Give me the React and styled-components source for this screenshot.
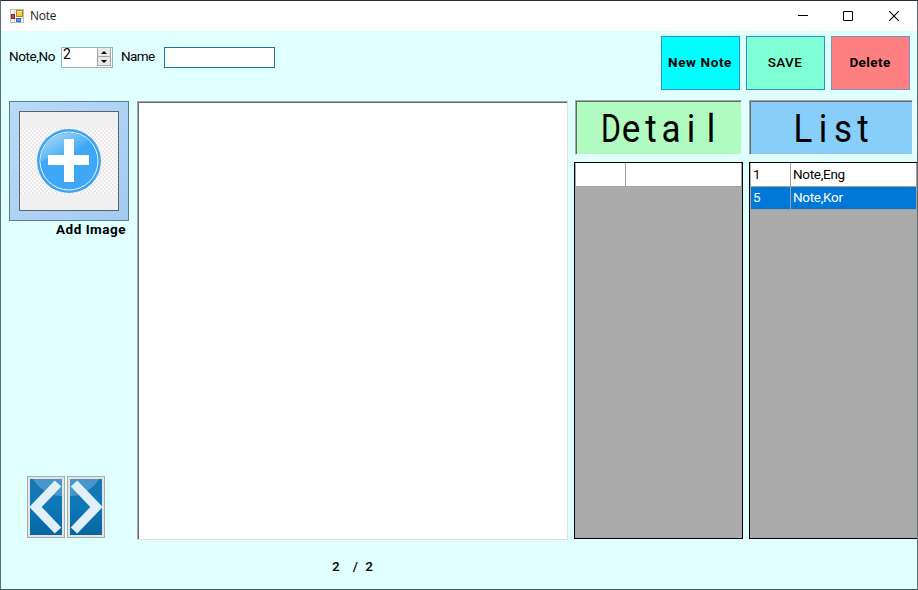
import React from "react";
import styled, { createGlobalStyle } from "styled-components";

const Global = createGlobalStyle`
  * { box-sizing: border-box; }
  body { margin: 0; overflow: hidden; font-family: Roboto, "Noto Sans CJK KR", sans-serif; font-size: 13.5px; color: #000; }
`;
const Window = styled.div`
  width: 918px; height: 590px; display: flex; flex-direction: column; background: #e0ffff;
  border: 1px solid #5f6f70; border-top-color: #2f2b30; border-bottom-color: #41575a;
`;
const TitleBar = styled.header`
  height: 30px; flex: none; background: #fff; display: flex; align-items: center; padding-left: 9px;
`;
const Title = styled.span`
  flex: 1; margin-left: 6px; font: 12px/16px "Open Sans", sans-serif; color: #222; letter-spacing: -0.25px;
`;
const Controls = styled.div`
  display: flex; width: 138px; height: 28px;
`;
const Control = styled.div`
  width: 46px; display: grid; place-items: center; padding-left: ${(p) => p.$shift || 0}px;
`;
const Toolbar = styled.div`
  height: 70px; flex: none; display: flex; padding: 5px 7px 0 8px;
`;
const Fields = styled.div`
  flex: 1; display: flex; align-items: flex-start; padding-top: 11px;
`;
const Label = styled.label`
  width: ${(p) => p.$w}px; line-height: 18px; white-space: nowrap; letter-spacing: ${(p) => p.$ls || 0}px;
`;
const Spinner = styled.div`
  width: 52px; height: 21px; background: #fff; border: 1px solid #a3b0b5; display: flex; margin-right: 8px;
`;
const SpinnerValue = styled.span`
  flex: 1; padding-left: 1px; line-height: 13px; font-size: 14px;
`;
const Arrows = styled.div`
  width: 15px; height: 18px; display: grid; grid-template-rows: 9px 9px;
`;
const Arrow = styled.div`
  width: 14px; background: #e9e9e9; border: solid #a6a6a6; border-width: 0 1px 1px;
  display: grid; place-items: center;
  svg { display: block; }
`;
const Input = styled.input`
  width: 111px; height: 21px; border: 1px solid #1f73b4; background: #fff; padding: 0 3px; outline: none;
`;
const Actions = styled.div`
  display: flex; gap: 6px;
`;
const Action = styled.button`
  width: 79px; height: 54px; padding: 0 1px 2px 0; border: 1px solid ${(p) => p.$edge || "#2f8fd0"};
  background: ${(p) => p.$bg}; color: #000; white-space: nowrap;
  font: ${(p) => p.$weight || 700} 13.5px Roboto, sans-serif; letter-spacing: ${(p) => p.$ls}px;
`;
const Main = styled.main`
  flex: 1; display: flex; padding-left: 8px;
`;
const Side = styled.aside`
  width: 128px; height: 437px; flex: none; display: flex; flex-direction: column;
`;
const ImageFrame = styled.button`
  width: 120px; height: 120px; padding: 9px; border: 1px solid #607d8c;
  background: linear-gradient(135deg, #b9daf8, #a3cbf0);
`;
const Picture = styled.div`
  width: 100px; height: 100px; border: 1px solid #5c646a; background: #f0f0f0;
  display: flex; align-items: center;
`;
const Caption = styled.div`
  width: 117px; line-height: 17px; text-align: right; font-weight: 700; letter-spacing: 0.5px;
`;
const Pager = styled.div`
  display: flex; gap: 2px; margin: auto 0 0 18px;
`;
const PagerButton = styled.button`
  width: 38px; height: 62px; padding: 2px; border: 1px solid #a9aba9; background: #e2e5e6; display: block;
  svg { display: block; }
`;
const Editor = styled.textarea`
  width: 431px; height: 439px; flex: none; resize: none; outline: none; background: #fff;
  border: 1px solid #d9e2e2; border-top-color: #a0a8a8; border-left-color: #a0a8a8;
  box-shadow: inset 1px 1px #696969;
`;
const Column = styled.section`
  width: ${(p) => p.$w}px; margin-left: 6px; margin-top: -1px; flex: none; display: flex; flex-direction: column; overflow: hidden;
`;
const Heading = styled.h1`
  width: ${(p) => p.$w}px; height: 55px; margin: 0 0 7px ${(p) => p.$ml || 0}px; padding: 3px 0 0 ${(p) => p.$indent}px;
  font: 400 38px/50px Roboto, sans-serif; display: flex; background: ${(p) => p.$bg};
  border: 1px solid #f3ffff; border-top-color: #a0a8a8; border-left-color: #a0a8a8;
  box-shadow: inset 1px 1px #696969;
`;
const Letter = styled.span`
  width: 20px; height: 50px; display: flex; justify-content: center;
  transform: scaleX(${(p) => (p.$wide ? 0.8 : 0.92)});
`;
const Grid = styled.div`
  width: ${(p) => p.$w}px; height: 377px; flex: none; background: #ababab; border: 1px solid #000; padding: 0 0 0 1px;
`;
const Row = styled.div`
  height: ${(p) => p.$h || 23}px; display: grid; grid-template-columns: ${(p) => p.$cols};
  background: ${(p) => (p.$selected ? "#0078d7" : "#fff")}; color: ${(p) => (p.$selected ? "#fff" : "#000")};
  line-height: ${(p) => (p.$selected ? 20 : 22)}px;
`;
const Cell = styled.div`
  padding-left: 2px; border-right: 1px solid #a0a0a0; border-bottom: 1px solid #a0a0a0;
  white-space: nowrap; letter-spacing: ${(p) => p.$ls || 0}px;
`;
const Footer = styled.footer`
  height: 48px; flex: none; padding: 15px 0 0 331px; display: flex; gap: 13px; font-weight: 500; line-height: 20px;
`;
const Total = styled.span`
  word-spacing: 4px;
`;

function Mono({ text }) {
  return [...text].map((c, i) => (
    <Letter key={i} $wide={c === "D"}>{c}</Letter>
  ));
}

function AppIcon() {
  return (
    <svg width="14" height="14" viewBox="0 0 14 14">
      <rect x=".5" y=".5" width="13" height="13" fill="#fff" stroke="#bcbcbc" />
      <path d="M4.5 0v14M0 9.5h14" stroke="#c7c7c7" />
      <rect x="1.5" y="5.500" width="3" height="4" fill="#c84545" stroke="#8e2020" />
      <rect x="6.5" y="1.5" width="6" height="6" fill="#f7cb45" stroke="#b8861c" />
      <path d="M7 2.500h5" stroke="#ffeb98" />
      <rect x="6.5" y="9.5" width="4" height="3" fill="#5f9ae8" stroke="#386db8" />
    </svg>
  );
}

function PlusPicture() {
  return (
    <svg width="98" height="66" viewBox="0 0 98 66">
      <defs>
        <pattern id="checks" width="4" height="4" patternUnits="userSpaceOnUse">
          <path fill="#fbfafa" d="M0 0h4v4H0z" />
          <path fill="#ece8e9" d="M0 0h2v2H0zM2 2h2v2H2z" />
        </pattern>
        <linearGradient id="shine" x1="0" y1="0" x2=".65" y2=".75">
          <stop offset="0" stopColor="#b9e0f8" />
          <stop offset=".7" stopColor="#62b9f5" />
          <stop offset="1" stopColor="#3fa7f5" />
        </linearGradient>
      </defs>
      <path fill="url(#checks)" d="M0 0h98v66H0z" />
      <circle cx="49" cy="33" r="32" fill="#3da5ef" />
      <circle cx="49" cy="33" r="29" fill="#3fa7f5" stroke="#e8f6ff" />
      <path d="M20.5 35A28.500 28.500 0 0 1 68 12Q60 26 44 27T20.500 35Z" fill="url(#shine)" />
      <path d="M44 11h10v16h15v10H54v17H44V37H28V27h16z" fill="#fff" />
    </svg>
  );
}

function Chevron({ flip }) {
  const id = flip ? "blueNext" : "bluePrev";
  return (
    <svg width="32" height="56" viewBox="0 0 32 56">
      <defs>
        <linearGradient id={id} x1="0" y1="0" x2="0" y2="1">
          <stop offset="0" stopColor="#1b76b2" />
          <stop offset=".5" stopColor="#0c78b8" />
          <stop offset="1" stopColor="#0666a2" />
        </linearGradient>
      </defs>
      <g transform={flip ? "translate(32 0) scale(-1 1)" : undefined}>
        <path fill={`url(#${id})`} d="M0 0h32v56H0z" />
        <path fill="#67aedb" opacity=".6" d="M3 0h29v17Q14 17 3 0Z" />
        <path d="M28 4.500L5.500 28L28 51.500" fill="none" stroke="#e0eff9" strokeWidth="9" />
      </g>
    </svg>
  );
}

export default function App() {
  return (
    <>
      <Global />
      <Window>
        <TitleBar>
          <AppIcon />
          <Title>Note</Title>
          <Controls>
            <Control $shift={2}><svg width="10" height="10"><path d="M0 4.500h10" stroke="#000" /></svg></Control>
            <Control><svg width="10" height="10"><path d="M.5.500h9v9h-9z" fill="none" stroke="#000" /></svg></Control>
            <Control><svg width="10" height="10"><path d="M0 0l10 10M10 0L0 10" stroke="#000" strokeWidth="1.100" /></svg></Control>
          </Controls>
        </TitleBar>
        <Toolbar>
          <Fields>
            <Label $w={52} $ls={-0.4}>Note,No</Label>
            <Spinner>
              <SpinnerValue>2</SpinnerValue>
              <Arrows>
                <Arrow><svg width="6" height="3"><path d="M0 3l3-3 3 3z" /></svg></Arrow>
                <Arrow><svg width="6" height="3"><path d="M0 0l3 3 3-3z" /></svg></Arrow>
              </Arrows>
            </Spinner>
            <Label $w={43} $ls={-0.6}>Name</Label>
            <Input aria-label="Name" />
          </Fields>
          <Actions>
            <Action $bg="#00ffff" $ls={0.6}>New Note</Action>
            <Action $bg="#7fffd4" $weight={500} $ls={0.4}>SAVE</Action>
            <Action $bg="#ff8080" $edge="#7f8fc0" $ls={0.4}>Delete</Action>
          </Actions>
        </Toolbar>
        <Main>
          <Side>
            <ImageFrame aria-label="Add Image"><Picture><PlusPicture /></Picture></ImageFrame>
            <Caption>Add Image</Caption>
            <Pager>
              <PagerButton aria-label="Previous"><Chevron /></PagerButton>
              <PagerButton aria-label="Next"><Chevron flip /></PagerButton>
            </Pager>
          </Side>
          <Editor aria-label="Note text" />
          <Column $w={169}>
            <Heading $w={167} $ml={1} $bg="#b0fcc0" $indent={25}><Mono text="Detail" /></Heading>
            <Grid $w={169}>
              <Row $h={24} $cols="50px 1fr"><Cell /><Cell /></Row>
            </Grid>
          </Column>
          <Column $w={168}>
            <Heading $w={164} $bg="#87cefa" $indent={43}><Mono text="List" /></Heading>
            <Grid $w={170}>
              <Row $h={24} $cols="40px 126px"><Cell>1</Cell><Cell $ls={-0.3}>Note,Eng</Cell></Row>
              <Row $cols="40px 126px" $selected><Cell>5</Cell><Cell $ls={-0.3}>Note,Kor</Cell></Row>
            </Grid>
          </Column>
        </Main>
        <Footer><span>2</span><Total>/ 2</Total></Footer>
      </Window>
    </>
  );
}
